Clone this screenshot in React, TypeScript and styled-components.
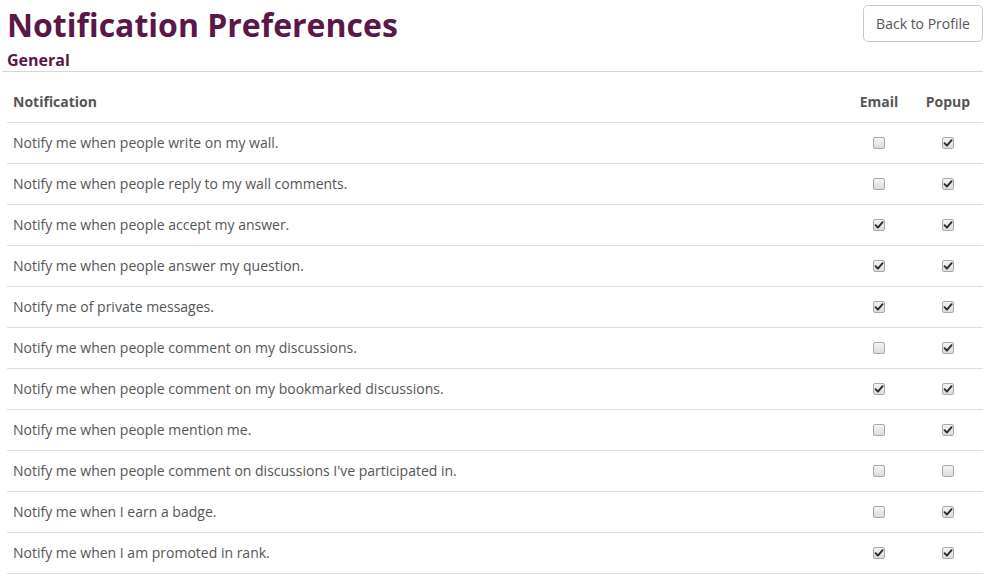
import React from "react";
import styled, { createGlobalStyle } from "styled-components";

const GlobalStyle = createGlobalStyle`
  html, body { margin: 0; padding: 0; background: #fff; }
  body { font-family: "Open Sans", "Noto Sans", sans-serif; color: #555; }
`;

const Page = styled.div`
  width: 989px;
  box-sizing: border-box;
  padding: 0 6px 0 2px;
`;

const Header = styled.div`
  display: flex;
  justify-content: space-between;
  align-items: flex-start;
  padding-left: 5px;
`;

const Title = styled.h1`
  margin: 5px 0 0;
  font-size: 32px;
  line-height: 40px;
  font-weight: 700;
  color: #5a1848;
`;

const BackButton = styled.button`
  margin-top: 5px;
  width: 120px;
  height: 37px;
  box-sizing: border-box;
  background: #fff;
  border: 1px solid #c8c8c8;
  border-radius: 5px;
  font-family: "Open Sans", sans-serif;
  font-size: 14px;
  color: #555;
  padding: 0;
  cursor: pointer;
`;

const SectionTitle = styled.h2`
  margin: 4px 0 0;
  padding: 0 0 0 5px;
  font-size: 16px;
  line-height: 22px;
  font-weight: 700;
  color: #5a1848;
  border-bottom: 1px solid #d6d6d6;
`;

const Table = styled.div`
  margin-left: 5px;
  display: grid;
  grid-template-columns: 1fr 68px 70px;
`;

const Row = styled.div<{ $head?: boolean }>`
  display: contents;
  & > div {
    border-bottom: 1px solid #ddd;
    padding: ${(p) => (p.$head ? "20px 0 10px" : "10px 0")};
    line-height: 20px;
    font-size: 14px;
    font-weight: ${(p) => (p.$head ? 700 : 400)};
    color: #555;
  }
`;

const LabelCell = styled.div`
  padding-left: 6px !important;
`;

const CheckCell = styled.div`
  display: flex;
  justify-content: center;
  align-items: center;
`;

const Box = styled.span`
  display: inline-block;
  width: 12px;
  height: 12px;
  box-sizing: border-box;
  border: 1px solid #a9a9a9;
  border-radius: 2px;
  background: linear-gradient(#f4f4f4, #dcdcdc);
  position: relative;
  margin-top: -1px;
  svg { position: absolute; left: 0; top: 0; }
`;

const Check = ({ on }: { on: boolean }) => (
  <Box>
    {on && (
      <svg width="10" height="10" viewBox="0 0 10 10">
        <path d="M1.6 5.2 L3.9 7.6 L8.6 2.2" fill="none" stroke="#2b2b2b" strokeWidth="1.9" strokeLinecap="round" strokeLinejoin="round" />
      </svg>
    )}
  </Box>
);

const rows: [string, boolean, boolean][] = [
  ["Notify me when people write on my wall.", false, true],
  ["Notify me when people reply to my wall comments.", false, true],
  ["Notify me when people accept my answer.", true, true],
  ["Notify me when people answer my question.", true, true],
  ["Notify me of private messages.", true, true],
  ["Notify me when people comment on my discussions.", false, true],
  ["Notify me when people comment on my bookmarked discussions.", true, true],
  ["Notify me when people mention me.", false, true],
  ["Notify me when people comment on discussions I've participated in.", false, false],
  ["Notify me when I earn a badge.", false, true],
  ["Notify me when I am promoted in rank.", true, true],
];

export default function App() {
  return (
    <Page>
      <GlobalStyle />
      <Header>
        <Title>Notification Preferences</Title>
        <BackButton>Back to Profile</BackButton>
      </Header>
      <SectionTitle>General</SectionTitle>
      <Table>
        <Row $head>
          <LabelCell>Notification</LabelCell>
          <CheckCell>Email</CheckCell>
          <CheckCell>Popup</CheckCell>
        </Row>
        {rows.map(([label, email, popup]) => (
          <Row key={label}>
            <LabelCell>{label}</LabelCell>
            <CheckCell><Check on={email} /></CheckCell>
            <CheckCell><Check on={popup} /></CheckCell>
          </Row>
        ))}
      </Table>
    </Page>
  );
}
